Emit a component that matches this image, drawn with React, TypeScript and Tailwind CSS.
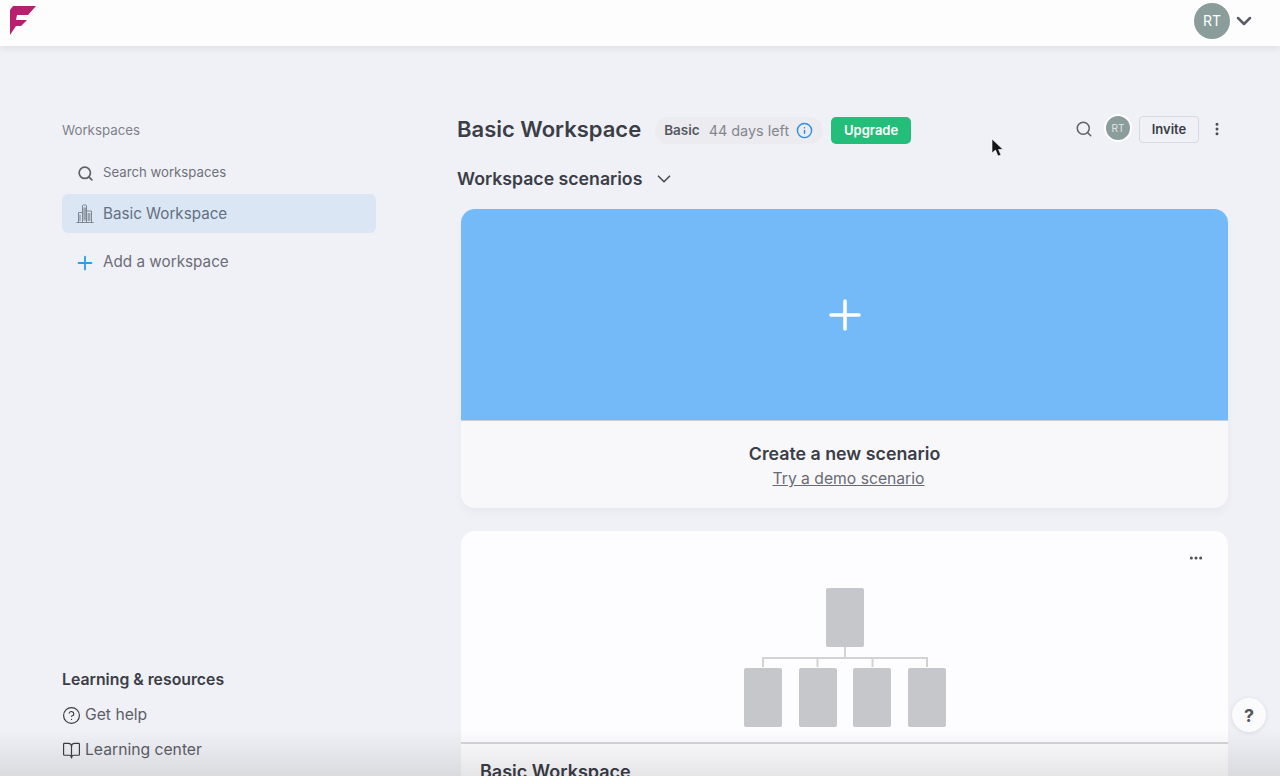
import { BookOpen, ChevronDown, CircleHelp, Ellipsis, EllipsisVertical, Info, Plus, Search } from "lucide-react";

function Building() {
  return (
    <svg width="18" height="20" viewBox="0 0 18 20" fill="none" stroke="#7d8590" strokeWidth="1">
      <path d="M0.500 18.500h17" />
      <path d="M2.500 18.500V8.500h4v10" />
      <path d="M6.500 18.500V2c0-.6.4-1 1-1h2c.6 0 1 .4 1 1v16.500" />
      <path d="M10.500 18.500V7h5v11.500" />
      <path d="M8 3.500v13M9.200 3.500v13M4 10.500v6.500M12.200 9v8M13.800 9v8" />
    </svg>
  );
}

function Tree() {
  return (
    <svg width="202" height="140" viewBox="0 0 202 140" fill="none">
      <path d="M101 59v11M19 79v-9h164v9M73.500 79v-9M128.500 79v-9" stroke="#d3d3d6" strokeWidth="2" />
      <rect x="82" y="0" width="38" height="59" rx="2" fill="#c6c7ca" />
      <rect x="0" y="80" width="38" height="59" rx="2" fill="#c6c7ca" />
      <rect x="55" y="80" width="38" height="59" rx="2" fill="#c6c7ca" />
      <rect x="109" y="80" width="38" height="59" rx="2" fill="#c6c7ca" />
      <rect x="164" y="80" width="38" height="59" rx="2" fill="#c6c7ca" />
    </svg>
  );
}

export default function App() {
  return (
    <div className="relative h-[776px] w-[1280px] overflow-hidden bg-[#f0f1f6] font-['Inter',sans-serif] text-[#3b3d47]">
      {/* top bar */}
      <header className="flex h-[46px] items-center justify-between bg-[#fdfdfe] pb-[4px] pl-[10px] pr-[24px] shadow-[0_2px_8px_rgba(0,0,0,0.08)]">
        <svg width="26" height="30" viewBox="0 0 26 30">
          <path d="M3 0H26L18 9H7L6 14H17L11 20H6L0 29V4Z" fill="#b81f6e" />
        </svg>
        <div className="flex items-center gap-[2px]">
          <div className="flex h-9 w-9 items-center justify-center rounded-full bg-[#8b9d9a] text-sm text-white">RT</div>
          <ChevronDown size={24} strokeWidth={2.5} className="text-[#5b5d66]" />
        </div>
      </header>

      <div className="flex h-[730px]">
        {/* sidebar */}
        <aside className="flex w-[457px] shrink-0 flex-col justify-between pl-[62px] pr-[81px] pt-[76px]">
          <div>
            <div className="text-[13.300px] leading-4 text-[#80828b]">Workspaces</div>
            <div className="mt-[17px] flex h-[36px] items-center gap-[9.500px] pl-[14.500px] text-[13.200px] text-[#6f717a]">
              <Search size={17} strokeWidth={2.400} className="text-[#5f6068]" />
              Search workspaces
            </div>
            <div className="mt-[3px] flex h-[39px] items-center gap-[9px] rounded-md bg-[#dbe6f5] pl-[14px] pt-[1px] text-[15.200px] text-[#63707f]">
              <Building />
              Basic Workspace
            </div>
            <div className="mt-[10px] flex h-[39px] items-center gap-[7.500px] pl-[11.500px] text-[15.250px] text-[#6b6d76]">
              <Plus size={22} strokeWidth={2} className="text-[#2d9cee]" />
              Add a workspace
            </div>
          </div>
          <div className="pb-[16px]">
            <div className="text-[15.800px] font-semibold leading-5">Learning &amp; resources</div>
            <div className="mt-[15px] flex items-center gap-[4px] text-[15.700px] leading-5 text-[#5c5e67]">
              <CircleHelp size={19} strokeWidth={1.5} className="text-[#3b3d47]" />
              Get help
            </div>
            <div className="mt-[15px] flex items-center gap-[4px] text-[15.700px] leading-5 text-[#5c5e67]">
              <BookOpen size={19} strokeWidth={1.5} className="text-[#3b3d47]" />
              Learning center
            </div>
          </div>
        </aside>

        {/* main column */}
        <main className="w-[771px]">
          <div className="mt-[69px] flex h-[28px] items-center">
            <h1 className="text-[22px] font-semibold leading-7">Basic Workspace</h1>
            <div className="ml-[14px] mt-[3px] flex h-[27px] items-center rounded-full bg-[#ebebf0] pl-[9px] pr-[10.500px] text-[14.400px]">
              <span className="text-[13.500px] font-semibold text-[#55575f]">Basic</span>
              <span className="ml-[9px] text-[#84868e]">44 days left</span>
              <Info size={17} strokeWidth={2} className="ml-[6.500px] text-[#2b8fe6]" />
            </div>
            <button className="ml-[8px] mt-[3px] flex h-[27px] w-[80px] items-center justify-center rounded-[5px] bg-[#23bf7a] text-[13px] font-semibold text-white">
              Upgrade
            </button>
            <div className="ml-auto flex items-center">
              <Search size={18} strokeWidth={2} className="text-[#5f6068]" />
              <div className="ml-[11px] mt-[-2px] flex h-[28px] w-[28px] items-center justify-center rounded-full border-2 border-white bg-[#8b9d9a] text-[10px] text-[#dfe6e4]">RT</div>
              <button className="ml-[7px] mt-[1px] flex h-[27px] w-[60px] items-center justify-center rounded-[4px] border border-[#d9dae0] text-[13px] font-semibold">
                Invite
              </button>
              <EllipsisVertical size={16} strokeWidth={2.5} className="ml-[10px] mr-[3px] text-[#4b4d56]" />
            </div>
          </div>

          <div className="mt-[22px] flex h-[28px] items-center gap-[11px]">
            <h2 className="text-[17.700px] font-semibold">Workspace scenarios</h2>
            <ChevronDown size={22} strokeWidth={1.8} className="text-[#4b4d56]" />
          </div>

          <div className="ml-[4px]">
            <section className="mt-[16px] overflow-hidden rounded-[14px] bg-[#f8f8fb] shadow-[0_6px_10px_rgba(0,0,0,0.03)]">
              <div className="flex h-[212px] items-center justify-center border-b border-[#c9ced6] bg-[#74b9f8]">
                <Plus size={48} strokeWidth={1.8} className="text-white" />
              </div>
              <div className="flex h-[87px] flex-col items-center pt-[21px]">
                <div className="text-[17.800px] font-semibold leading-6">Create a new scenario</div>
                <a className="pl-[8px] text-[15.700px] leading-[26px] text-[#696b74] underline">Try a demo scenario</a>
              </div>
            </section>

            <section className="relative mt-[23px] flex h-[300px] flex-col rounded-[14px] bg-[#fdfcfe]">
              <Ellipsis size={16} strokeWidth={2.5} className="absolute right-[24px] top-[19px] text-[#4b4d56]" />
              <div className="flex h-[211px] justify-center pt-[57px]">
                <Tree />
              </div>
              <div className="border-t-2 border-[#d6d6da] pl-[19px] pt-[18px] text-[18px] font-semibold leading-5">Basic Workspace</div>
            </section>
          </div>
        </main>
      </div>

      {/* help button and fade along the bottom */}
      <div className="absolute bottom-[44px] right-[14px] z-10 flex h-[34px] w-[34px] items-center justify-center rounded-full bg-[#fbfbfd] text-[18px] font-bold text-[#55575f] shadow-[0_1px_5px_rgba(0,0,0,0.1)]">
        ?
      </div>
      <div className="pointer-events-none absolute inset-x-0 bottom-0 h-[46px] bg-gradient-to-b from-transparent to-[#00000018]" />

      {/* captured mouse pointer */}
      <svg width="14" height="20" viewBox="0 0 14 20" className="absolute left-[991px] top-[138px] z-10">
        <path d="M1 1V15L4.500 12L7 18L10 17L7.500 11.500H12Z" fill="#15161a" stroke="#fff" strokeWidth="0.6" />
      </svg>
    </div>
  );
}
